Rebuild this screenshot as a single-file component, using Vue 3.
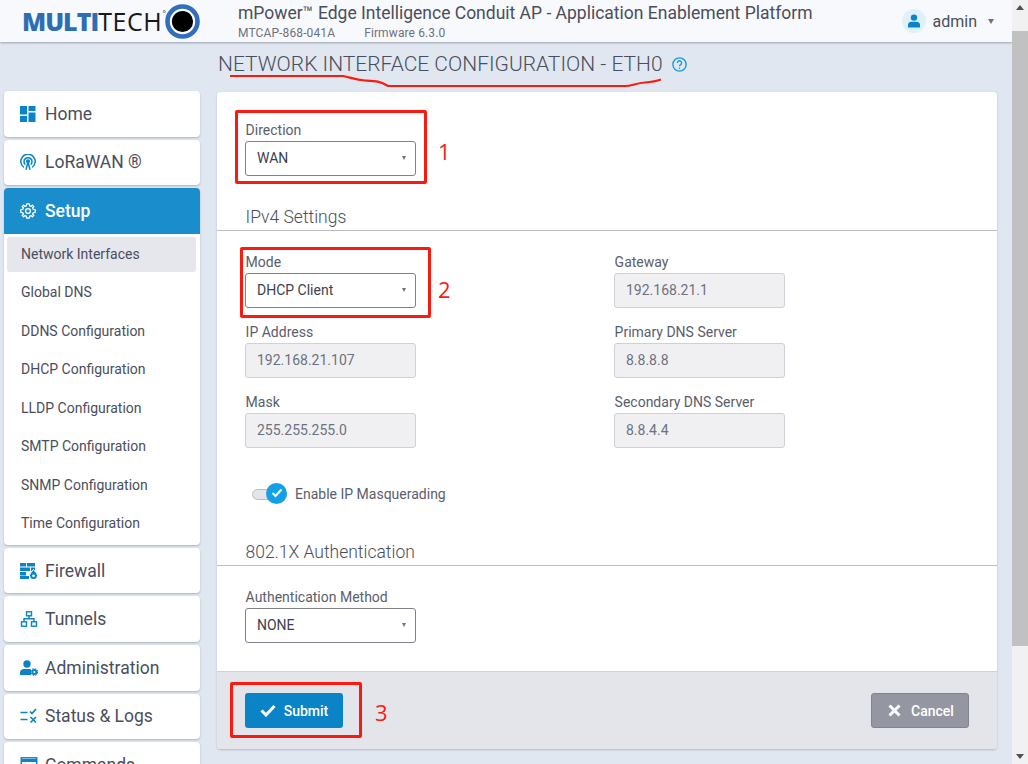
<script setup>
const subItems = [
  'Network Interfaces', 'Global DNS', 'DDNS Configuration', 'DHCP Configuration',
  'LLDP Configuration', 'SMTP Configuration', 'SNMP Configuration', 'Time Configuration'
]
const leftFields = [
  { label: 'IP Address', value: '192.168.21.107' },
  { label: 'Mask', value: '255.255.255.0' }
]
const rightFields = [
  { label: 'Gateway', value: '192.168.21.1' },
  { label: 'Primary DNS Server', value: '8.8.8.8' },
  { label: 'Secondary DNS Server', value: '8.8.4.4' }
]
</script>

<template>
  <div class="window">
    <div class="page">
      <header class="topbar">
        <div class="logo">
          <span class="logo-multi">MULTI</span><span class="logo-tech">TECH</span><span class="logo-reg">°</span>
          <svg class="logo-mark" width="35" height="35" viewBox="0 0 35 35">
            <circle cx="17.5" cy="17.5" r="15" fill="#fff" stroke="#2f6fbc" stroke-width="4.6" />
            <circle cx="17.5" cy="17.5" r="10.6" fill="#000" />
          </svg>
        </div>
        <div class="product">
          <div class="product-title">mPower™ Edge Intelligence Conduit AP - Application Enablement Platform</div>
          <div class="product-meta"><span>MTCAP-868-041A</span><span>Firmware 6.3.0</span></div>
        </div>
        <div class="user">
          <span class="avatar">
            <svg width="14" height="14" viewBox="0 0 14 14" fill="#0a84c6">
              <circle cx="7" cy="3.6" r="3.2" />
              <path d="M1 13.5V11c0-2 1.8-3.2 3.6-3.2h4.8C11.200 7.800 13 9 13 11v2.500z" />
            </svg>
          </span>
          <span class="user-name">admin</span>
          <span class="caret"></span>
        </div>
      </header>

      <div class="layout">
        <aside class="sidebar">
          <div class="nav-card">
            <svg class="nav-icon" viewBox="0 0 16 16" fill="#0a84c6">
              <rect x="0" y="0" width="7" height="8.500" /><rect x="8.500" y="0" width="7" height="5" />
              <rect x="0" y="10" width="7" height="6" /><rect x="8.500" y="6.500" width="7" height="9.500" />
            </svg>
            <span>Home</span>
          </div>
          <div class="nav-card">
            <svg class="nav-icon" viewBox="0 0 16 16" fill="none" stroke="#0a84c6" stroke-width="1.500">
              <path d="M3.800 13.300A7.200 7.200 0 1 1 12.200 13.300" />
              <path d="M5.300 10.600A4 4 0 1 1 10.700 10.600" />
              <circle cx="8" cy="7.200" r="1.300" fill="#0a84c6" />
              <path d="M8 8 6 15.800M8 8l2 7.800" />
            </svg>
            <span>LoRaWAN ®</span>
          </div>
          <div class="setup-group">
            <div class="nav-card active">
              <svg class="nav-icon" viewBox="0 0 16 16" fill="none" stroke="#fff" stroke-width="1.300" stroke-linejoin="round">
                <path d="M6.700.8H9.300L9.700 2.800 11.200 3.400 12.400 2.100 13.900 3.600 12.600 4.800 13.200 6.300 15.200 6.700V9.300L13.200 9.700 12.600 11.200 13.900 12.400 12.400 13.900 11.200 12.600 9.700 13.200 9.300 15.200H6.700L6.300 13.200 4.800 12.600 3.600 13.900 2.100 12.400 3.400 11.200 2.800 9.700 .8 9.300V6.700L2.800 6.300 3.400 4.800 2.100 3.600 3.600 2.100 4.800 3.400 6.300 2.800Z" />
                <circle cx="8" cy="8" r="2.400" />
              </svg>
              <span>Setup</span>
            </div>
            <ul class="sub-list">
              <li v-for="(item, i) in subItems" :key="item" :class="{ current: i === 0 }">{{ item }}</li>
            </ul>
          </div>
          <div class="nav-card">
            <svg class="nav-icon wide" viewBox="0 0 18 16" fill="#0a84c6">
              <rect x="0" y="0" width="6" height="3.500" /><rect x="7" y="0" width="8" height="3.500" />
              <rect x="0" y="4.500" width="10" height="3.500" /><rect x="11" y="4.500" width="4" height="3.500" />
              <rect x="0" y="9" width="6" height="3.500" /><rect x="0" y="13" width="9" height="3" />
              <path d="M13.500 6.500c1 2 4 3.500 4 6.200a4 4 0 0 1-8 0c0-2 2-3.700 4-6.200z" stroke="#fff" stroke-width="1" />
              <circle cx="13.500" cy="12.800" r="1.400" fill="#fff" />
            </svg>
            <span>Firewall</span>
          </div>
          <div class="nav-card">
            <svg class="nav-icon wide" viewBox="0 0 17 16" fill="none" stroke="#0a84c6" stroke-width="1.400">
              <rect x="6" y=".8" width="5" height="4" /><rect x="1" y="10.800" width="5" height="4.400" /><rect x="11" y="10.800" width="5" height="4.400" />
              <path d="M8.500 4.800v3M3.500 10.800V7.800h10v3" />
            </svg>
            <span>Tunnels</span>
          </div>
          <div class="nav-card">
            <svg class="nav-icon wide" viewBox="0 0 18 16" fill="#0a84c6">
              <circle cx="7" cy="4" r="3.700" />
              <path d="M0 15v-2.500C0 10.500 1.800 9 4 9h5.500c1 0 1.500.3 1.500.3V15z" />
              <circle cx="14.300" cy="12" r="2" fill="none" stroke="#0a84c6" stroke-width="1.800" />
              <circle cx="14.300" cy="12" r="3.300" fill="none" stroke="#0a84c6" stroke-width="1.200" stroke-dasharray="1.500 1.100" />
            </svg>
            <span>Administration</span>
          </div>
          <div class="nav-card">
            <svg class="nav-icon wide" viewBox="0 0 17 16" fill="none" stroke="#0a84c6" stroke-width="1.700">
              <path d="M0 4.500h7M0 11.500h7M9.500 3.500l2 2 4-4.500M10 9l5.500 5.500M15.500 9 10 14.500" />
            </svg>
            <span>Status &amp; Logs</span>
          </div>
          <div class="nav-card">
            <svg class="nav-icon wide" viewBox="0 0 17 16" fill="none" stroke="#0a84c6" stroke-width="1.500">
              <rect x=".8" y=".8" width="15.400" height="14.400" />
              <path d="M.8 3.500h15.400" stroke-width="3" />
              <path d="M4 7l2.500 2L4 11" />
            </svg>
            <span>Commands</span>
          </div>
        </aside>

        <main class="content">
          <h1 class="page-title">
            NETWORK INTERFACE CONFIGURATION - ETH0
            <svg class="help" width="15" height="15" viewBox="0 0 15 15" fill="none" stroke="#1a9bdc" stroke-width="1.400">
              <circle cx="7.500" cy="7.500" r="6.600" />
              <path d="M5.400 5.900a2.100 2.100 0 1 1 3.300 1.700c-.8.500-1.200.9-1.200 1.700" />
              <circle cx="7.500" cy="11.200" r=".5" fill="#1a9bdc" stroke-width=".6" />
            </svg>
          </h1>

          <section class="panel">
            <div class="panel-body">
              <div class="field direction">
                <label>Direction</label>
                <div class="select">WAN<span class="select-caret"></span></div>
              </div>

              <h2 class="section-title">IPv4 Settings</h2>
              <div class="columns">
                <div class="column">
                  <div class="field">
                    <label>Mode</label>
                    <div class="select">DHCP Client<span class="select-caret"></span></div>
                  </div>
                  <div v-for="f in leftFields" :key="f.label" class="field">
                    <label>{{ f.label }}</label>
                    <div class="input">{{ f.value }}</div>
                  </div>
                </div>
                <div class="column">
                  <div v-for="f in rightFields" :key="f.label" class="field">
                    <label>{{ f.label }}</label>
                    <div class="input">{{ f.value }}</div>
                  </div>
                </div>
              </div>

              <div class="toggle-row">
                <span class="toggle">
                  <span class="knob">
                    <svg width="12" height="10" viewBox="0 0 12 10" fill="none" stroke="#fff" stroke-width="2">
                      <path d="M1.500 5l3 3 6-6.500" />
                    </svg>
                  </span>
                </span>
                <span>Enable IP Masquerading</span>
              </div>

              <h2 class="section-title auth-title">802.1X Authentication</h2>
              <div class="field auth">
                <label>Authentication Method</label>
                <div class="select">NONE<span class="select-caret"></span></div>
              </div>
            </div>

            <footer class="panel-footer">
              <button class="btn submit" type="button">
                <svg width="16" height="13" viewBox="0 0 16 13" fill="none" stroke="#fff" stroke-width="3">
                  <path d="M1.500 6.500l4.500 4.500 8.500-9" />
                </svg>
                Submit
              </button>
              <button class="btn cancel" type="button">
                <svg width="13" height="13" viewBox="0 0 13 13" fill="none" stroke="#fff" stroke-width="3">
                  <path d="M1.500 1.500l10 10M11.500 1.500l-10 10" />
                </svg>
                Cancel
              </button>
            </footer>
          </section>
        </main>
      </div>

      <svg class="underline" width="450" height="24" viewBox="0 0 450 24" fill="none" stroke="#fb1a10" stroke-width="2.200">
        <path d="M10 6H123C130 7 135 10 145 10.500C155 11 160 11 168 16H405C412 16 416 13 425 12.500C432 12 437 11 441 9.500" />
      </svg>
      <div class="mark mark-1"></div>
      <div class="mark mark-2"></div>
      <div class="mark mark-3"></div>
      <span class="num num-1">1</span>
      <span class="num num-2">2</span>
      <span class="num num-3">3</span>
    </div>

    <div class="scrollbar">
      <span class="arrow up"></span>
      <span class="thumb"></span>
      <span class="arrow down"></span>
    </div>
  </div>
</template>

<style>
html, body { margin: 0; overflow: hidden; }
</style>

<style scoped>
* { box-sizing: border-box; }
.window {
  display: flex; width: 1028px; height: 764px; overflow: hidden;
  font-family: Roboto, "Liberation Sans", sans-serif; color: #4a4e5c; background: #e0e7f0;
}
.page { position: relative; width: 1012px; height: 764px; overflow: hidden; background: #e0e7f0; }

.topbar {
  display: flex; align-items: flex-start; height: 42px; background: #f8f9fc;
  box-shadow: 0 1px 2px rgba(70, 80, 100, .45);
}
.logo { display: flex; align-items: center; width: 238px; height: 42px; padding: 0 0 0 22px; }
.logo-multi { font: 800 25px/42px "Open Sans", sans-serif; color: #2d6db5; letter-spacing: -1px; }
.logo-tech { font: 400 25px/42px "Open Sans", sans-serif; color: #16181c; letter-spacing: .6px; }
.logo-reg { flex: none; width: 3px; align-self: flex-start; margin-top: 8px; font: 400 8px/10px "Open Sans", sans-serif; color: #16181c; }
.logo-mark { flex: none; margin-left: 0; }
.product { flex: 1; padding-top: 2px; }
.product-title { font-size: 17.5px; line-height: 22px; color: #4a4e5c; }
.product-meta { display: flex; gap: 29px; font-size: 12px; letter-spacing: .12px; line-height: 15px; margin-top: 2px; color: #6d7280; }
.user { display: flex; align-items: center; height: 42px; padding-right: 18px; }
.avatar { display: flex; align-items: center; justify-content: center; width: 24px; height: 24px; border-radius: 50%; background: #dff1fd; }
.user-name { font-size: 16px; margin-left: 7px; }
.caret { width: 0; height: 0; margin-left: 11px; border: 3.500px solid transparent; border-top: 5px solid #6d7280; border-bottom: 0; }

.layout { display: flex; }
.sidebar { flex: none; width: 196px; margin-left: 4px; padding-top: 49px; display: flex; flex-direction: column; gap: 3px; }
.nav-card {
  display: flex; align-items: center; height: 45.6px; flex: none; padding-left: 16px; gap: 9px;
  background: #fff; border-radius: 4px; box-shadow: 0 1px 2px rgba(70, 80, 100, .35);
  font-size: 17.5px; color: #4a4e5c;
}
.nav-icon { flex: none; width: 16px; height: 16px; }
.nav-icon.wide { width: 18px; margin-right: -2px; }
.setup-group { background: #fff; border-radius: 4px; box-shadow: 0 1px 2px rgba(70, 80, 100, .35); }
.nav-card.active { background: #1a8dcc; color: #fff; font-weight: 500; box-shadow: none; border-radius: 4px 4px 0 0; }
.sub-list { list-style: none; margin: 0; padding: 3px 4px 0 3px; }
.sub-list li { height: 38.500px; line-height: 35.5px; padding-left: 14px; font-size: 14px; color: #4a4e5c; border-radius: 3px; }
.sub-list li.current { height: 35px; line-height: 35px; margin-bottom: 3.500px; background: #e6e7ec; }

.content { flex: none; width: 780px; margin-left: 17px; }
.page-title { display: flex; align-items: center; gap: 9px; height: 50px; margin: 0 0 0 1px; padding-bottom: 6px; font-size: 21px; font-weight: 300; color: #4a4e5c; }
.help { flex: none; }

.panel { height: 657px; background: #fff; border-radius: 4px; box-shadow: 0 1px 2px rgba(70, 80, 100, .3); display: flex; flex-direction: column; overflow: hidden; }
.panel-body { flex: 1; padding-top: 30px; }
.field { display: block; width: 171px; margin-left: 28px; }
.field label { display: block; height: 19px; padding-left: .6px; font-size: 14px; line-height: 16px; color: #5a5e6c; }
.select, .input { position: relative; height: 35px; border-radius: 3px; padding-left: 11px; font-size: 14px; line-height: 33px; }
.select { border: 1px solid #7f828c; background: #fff; color: #3e414c; }
.input { border: 1px solid #cfd1d6; background: #f0f0f2; color: #6d7280; }
.select-caret { position: absolute; right: 9px; top: 14px; width: 0; height: 0; border: 2.500px solid transparent; border-top: 4px solid #6d7280; border-bottom: 0; }

.section-title { margin: 30px 0 0; padding: 0 0 2px 28.500px; height: 22px; border-bottom: 1px solid #b9bcc2; box-sizing: content-box; font-size: 17.5px; font-weight: 300; line-height: 22px; color: #4a4e5c; }
.columns { display: flex; padding-top: 23px; }
.column { width: 369px; display: flex; flex-direction: column; gap: 16px; }

.toggle-row { display: flex; align-items: center; margin: 34px 0 0 35px; height: 24px; font-size: 14px; color: #5a5e6c; gap: 8px; }
.toggle { position: relative; display: block; width: 35px; height: 11px; border-radius: 6px; background: #e4e5ea; border: 1px solid #b9bcc2; }
.knob { position: absolute; right: -1px; top: -7px; width: 21px; height: 21px; border-radius: 50%; background: #14a0e8; display: flex; align-items: center; justify-content: center; }
.auth-title { margin-top: 35px; }
.auth { margin-top: 23px; }

.panel-footer { display: flex; justify-content: space-between; align-items: flex-start; height: 78px; padding: 21px 28px 0; background: #e4e5ea; border-top: 1px solid #cfd1d6; }
.btn { display: flex; align-items: center; justify-content: center; gap: 8px; height: 35px; border-radius: 3px; font: 500 14px Roboto, sans-serif; color: #fff; border: 0; padding: 0; }
.submit { width: 98px; background: #0a84c6; }
.cancel { width: 98px; gap: 10px; padding-left: 2px; background: #9497a2; border: 1px solid #808390; }

.underline { position: absolute; left: 220px; top: 70px; }
.mark { position: absolute; border: 3px solid #fb1a10; border-radius: 2px; }
.mark-1 { left: 235px; top: 110px; width: 192px; height: 74px; }
.mark-2 { left: 240px; top: 247px; width: 191px; height: 71px; }
.mark-3 { left: 230px; top: 682px; width: 132px; height: 56px; }
.num { position: absolute; font-size: 22px; line-height: 26px; color: #fb1a10; font-family: "Open Sans", sans-serif; }
.num-1 { left: 438px; top: 138px; }
.num-2 { left: 438px; top: 276px; }
.num-3 { left: 375px; top: 699px; }

.scrollbar { position: relative; flex: none; width: 16px; height: 764px; background: #f1f1f1; }
.thumb { position: absolute; left: 0; top: 31px; width: 16px; height: 615px; background: #c1c1c1; }
.arrow { position: absolute; left: 4px; width: 0; height: 0; border: 4px solid transparent; }
.arrow.up { top: 5px; border-top: 0; border-bottom: 5px solid #505050; }
.arrow.down { bottom: 5px; border-bottom: 0; border-top: 5px solid #505050; }
</style>
